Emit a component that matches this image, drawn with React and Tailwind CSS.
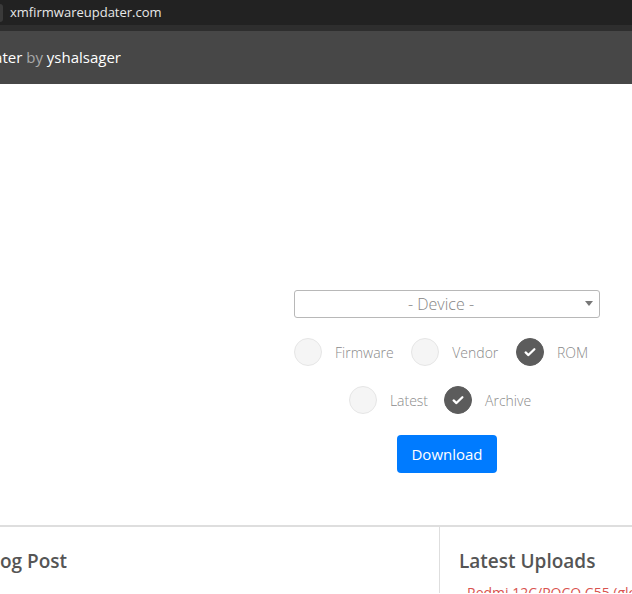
import React, { useState } from 'react';

const Radio = ({ label, checked, onClick }) => (
  <label className="flex items-center cursor-pointer" onClick={onClick}>
    <span
      className={`flex items-center justify-center w-[28px] h-[28px] rounded-full border ${
        checked ? 'bg-[#5c5c5c] border-[#5c5c5c]' : 'bg-[#f5f5f5] border-[#e6e6e6]'
      }`}
    >
      {checked && (
        <svg width="14" height="14" viewBox="0 0 16 16" fill="none">
          <path d="M3 8.5l3.2 3L13 4.8" stroke="#fff" strokeWidth="2.6" strokeLinecap="round" strokeLinejoin="round" />
        </svg>
      )}
    </span>
    <span className="ml-[13px] text-[14px] font-light text-[#8a8a8a]">{label}</span>
  </label>
);

export default function App() {
  const [source, setSource] = useState('ROM');
  const [kind, setKind] = useState('Archive');

  return (
    <div className="w-[632px] h-[594px] overflow-hidden bg-white font-['Open_Sans',sans-serif]">
      {/* browser bar */}
      <div className="h-[25px] bg-[#222222] flex items-center">
        <div className="w-[3px] h-[18px] bg-[#3a3a3a] rounded-r" />
        <span className="ml-[7px] text-[13px] text-[#e8e8e8]">xmfirmwareupdater.com</span>
      </div>
      <div className="h-[6px] bg-[#2e2e2e]" />

      {/* navbar */}
      <div className="h-[53px] bg-[#474747] flex items-center">
        <div className="w-[121px] shrink-0 flex justify-end overflow-hidden whitespace-nowrap text-[15px] text-white">
          <span>
            Xiaomi Firmware Updater <span className="text-[#a8a8a8]">by</span> yshalsager
          </span>
        </div>
      </div>

      {/* form */}
      <div className="h-[441px] pl-[294px] pr-[32px] pt-[206px]">
        <div className="relative h-[28px] border border-[#b8b8b8] rounded-[3px] flex items-center justify-center pr-[12px]">
          <span className="text-[16px] font-light text-[#858585]">- Device -</span>
          <svg className="absolute right-[6px] top-[10px]" width="8" height="5" viewBox="0 0 8 5">
            <path d="M0 0h8L4 5z" fill="#777" />
          </svg>
        </div>
        <div className="mt-[20px] flex justify-between pr-[12px]">
          {['Firmware', 'Vendor', 'ROM'].map((s) => (
            <Radio key={s} label={s} checked={source === s} onClick={() => setSource(s)} />
          ))}
        </div>
        <div className="mt-[20px] flex justify-center gap-[16px] pr-[14px]">
          {['Latest', 'Archive'].map((s) => (
            <Radio key={s} label={s} checked={kind === s} onClick={() => setKind(s)} />
          ))}
        </div>
        <div className="mt-[21px] flex justify-center">
          <button className="h-[38px] px-[14px] rounded-[4px] bg-[#007bff] text-white text-[15px]">Download</button>
        </div>
      </div>

      {/* bottom */}
      <div className="border-t-2 border-[#dedede] flex h-[68px]">
        <div className="w-[440px] shrink-0 border-r border-[#dedede] pt-[20px]">
          <div className="w-[67px] flex justify-end overflow-hidden whitespace-nowrap">
            <h2 className="text-[19px] font-semibold text-[#555]">Latest Blog Post</h2>
          </div>
        </div>
        <div className="flex-1 min-w-0 pl-[19px] pt-[20px] overflow-hidden">
          <h2 className="text-[19px] font-semibold text-[#555] whitespace-nowrap">Latest Uploads</h2>
          <div className="mt-[6px] pl-[8px] text-[14px] text-[#d9534f] whitespace-nowrap">Redmi 12C/POCO C55 (global)</div>
        </div>
      </div>
    </div>
  );
}
